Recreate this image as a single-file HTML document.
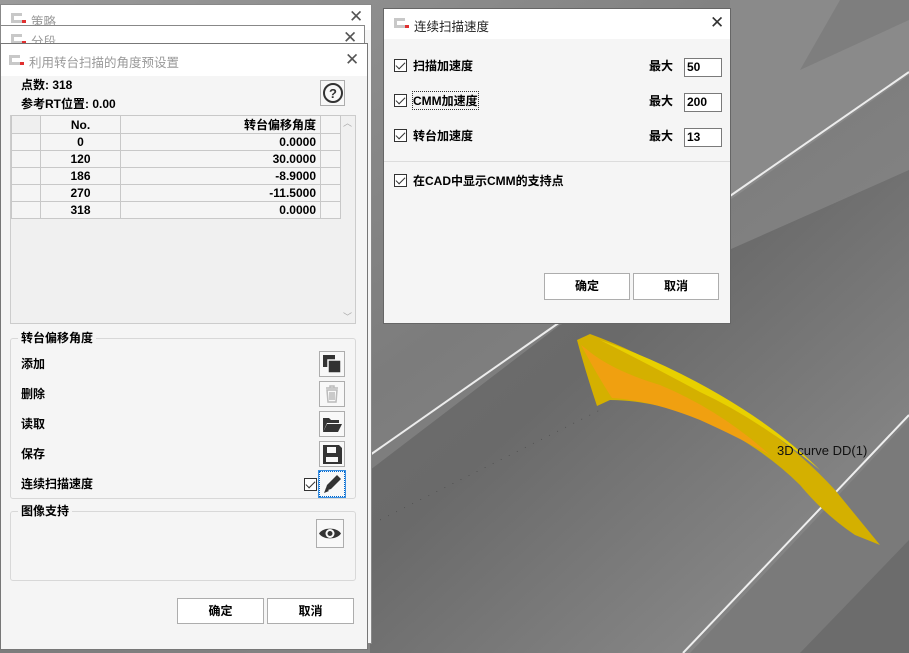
<!DOCTYPE html>
<html><head><meta charset="utf-8"><style>
*{margin:0;padding:0;box-sizing:border-box}
body{width:909px;height:653px;position:relative;overflow:hidden;background:#7a7a7a;font-family:"Liberation Sans","Noto Sans CJK SC",sans-serif;font-size:12px;color:#000}
.a{position:absolute}
.b{font-weight:bold}
.win{position:absolute;background:#f5f5f5;border:1px solid #888}
.tb{position:absolute;left:0;right:0;top:0;background:#fff}
.tt{position:absolute;color:#999;font-size:12.5px}
.x{position:absolute;font-size:17px;color:#555;font-weight:normal}
.logo{position:absolute;width:11px;height:10px;border:3px solid #c8c8c8;border-right:none;}
.logo:after{content:"";position:absolute;left:8px;bottom:-3px;width:4px;height:3px;background:#e03030}
.btn{position:absolute;background:#fff;border:1px solid #adadad;text-align:center;font-weight:bold;line-height:24px}
.ib{position:absolute;width:26px;height:26px;border:1px solid #adadad;background:#f8f8f8}
.cb{position:absolute;width:13px;height:13px;border:1px solid #333;background:#fff}
.cb:after{content:"";position:absolute;left:3px;top:0px;width:4px;height:8px;border:solid #333;border-width:0 1px 1px 0;transform:rotate(45deg)}
.inp{position:absolute;width:38px;height:19px;border:1px solid #7a7a7a;background:#fff;font-weight:bold;padding-left:2px;line-height:17px}
table{border-collapse:collapse}
td{border:1px solid #c8c8c8;height:17px;font-weight:bold;padding:0 4px}
</style></head><body>
<svg class="a" style="left:0;top:0" width="909" height="653">
<defs>
<linearGradient id="g1" x1="0" y1="0" x2="1" y2="1"><stop offset="0" stop-color="#9a9a9a"/><stop offset="0.5" stop-color="#7c7c7c"/><stop offset="1" stop-color="#909090"/></linearGradient>
<linearGradient id="g2" x1="0" y1="0" x2="1" y2="1"><stop offset="0" stop-color="#707070"/><stop offset="0.4" stop-color="#6a6a6a"/><stop offset="1" stop-color="#939393"/></linearGradient>
</defs>
<rect width="909" height="653" fill="url(#g1)"/>
<polygon points="370,470 560,325 909,170 909,420 690,653 370,653" fill="url(#g2)"/>
<polygon points="730,200 909,75 909,0 730,0" fill="#8a8a8a"/>
<polygon points="840,0 909,0 909,20 800,70" fill="#7e7e7e"/>
<polygon points="690,653 909,420 909,653" fill="#7a7a7a"/>
<polygon points="800,653 909,540 909,653" fill="#6c6c6c"/>
<line x1="370" y1="455" x2="560" y2="322" stroke="#ececec" stroke-width="2"/>
<line x1="683" y1="653" x2="909" y2="415" stroke="#eeeeee" stroke-width="2"/>
<line x1="730" y1="196" x2="909" y2="72" stroke="#ececec" stroke-width="2"/>
<line x1="380" y1="520" x2="600" y2="410" stroke="#444" stroke-width="0.6" stroke-dasharray="1 8"/>
<path d="M577,340 L590,334 Q640,352 700,388 Q780,430 835,490 L880,545 L855,535 Q825,515 800,485 Q760,445 700,418 Q650,400 610,400 L597,406 Q585,370 577,340z" fill="#d4b000"/>
<path d="M581,345 Q600,380 612,398 Q650,400 700,420 Q740,438 770,455 Q720,410 660,385 Q610,370 585,348z" fill="#f0a010"/>
<path d="M600,340 Q660,360 720,395 Q780,430 820,470 Q760,420 700,392 Q650,365 600,340z" fill="#e8d000"/>
<text x="777" y="455" font-family="Liberation Sans" font-size="13" fill="#111">3D curve DD(1)</text>
</svg>

<!-- back windows -->
<div class="win" style="left:0;top:4px;width:372px;height:640px;background:#f5f5f5"><div class="tb" style="height:25px"></div><div class="logo" style="left:10px;top:8px"></div><div class="tt" style="left:30px;top:6px">策略</div><div class="x" style="left:348px;top:2px">✕</div></div>
<div class="win" style="left:0;top:25px;width:365px;height:625px"><div class="tb" style="height:25px"></div><div class="logo" style="left:10px;top:8px"></div><div class="tt" style="left:30px;top:5px">分段</div><div class="x" style="left:342px;top:2px">✕</div></div>

<!-- main dialog -->
<div class="win" style="left:0;top:43px;width:368px;height:607px;border-color:#777">
<div class="tb" style="height:32px"></div>
<div class="logo" style="left:8px;top:11px"></div>
<div class="tt" style="left:28px;top:8px">利用转台扫描的角度预设置</div>
<div class="x" style="left:344px;top:6px">✕</div>
</div>
<div class="a b" style="left:21px;top:76px">点数: 318</div>
<div class="a b" style="left:21px;top:95px">参考RT位置: 0.00</div>
<div class="ib" style="left:320px;top:80px;width:25px"><svg width="24" height="24"><circle cx="12" cy="12" r="9" fill="none" stroke="#333" stroke-width="2"/><text x="12" y="17" text-anchor="middle" font-family="Liberation Sans" font-weight="bold" font-size="13" fill="#333">?</text></svg></div>
<div class="a" style="left:10px;top:115px;width:346px;height:209px;border:1px solid #ccc;background:#f0f0f0"></div>
<div class="a" style="left:340px;top:116px;width:15px;height:207px;background:#f0f0f0;color:#aaa;font-size:9px;text-align:center">︿<div style="position:absolute;bottom:0;width:15px">﹀</div></div>
<table class="a" style="left:11px;top:115px;background:#f5f5f5">
<tr><td style="width:29px;background:#efefef"></td><td style="width:80px;text-align:center">No.</td><td style="width:200px;text-align:right">转台偏移角度</td><td style="width:20px"></td></tr>
<tr><td></td><td style="text-align:center">0</td><td style="text-align:right">0.0000</td><td></td></tr>
<tr><td></td><td style="text-align:center">120</td><td style="text-align:right">30.0000</td><td></td></tr>
<tr><td></td><td style="text-align:center">186</td><td style="text-align:right">-8.9000</td><td></td></tr>
<tr><td></td><td style="text-align:center">270</td><td style="text-align:right">-11.5000</td><td></td></tr>
<tr><td></td><td style="text-align:center">318</td><td style="text-align:right">0.0000</td><td></td></tr>
</table>

<div class="a" style="left:10px;top:338px;width:346px;height:161px;border:1px solid #d8d8d8;border-radius:3px"></div>
<div class="a b" style="left:18px;top:329px;background:#f5f5f5;padding:0 3px">转台偏移角度</div>
<div class="a b" style="left:21px;top:355px">添加</div>
<div class="a b" style="left:21px;top:385px">删除</div>
<div class="a b" style="left:21px;top:415px">读取</div>
<div class="a b" style="left:21px;top:445px">保存</div>
<div class="a b" style="left:21px;top:475px">连续扫描速度</div>
<div class="ib" style="left:319px;top:351px"><svg width="24" height="24"><rect x="3" y="3" width="12" height="12" fill="#333"/><rect x="8" y="8" width="13" height="13" fill="#333" stroke="#f8f8f8" stroke-width="1.5"/></svg></div>
<div class="ib" style="left:319px;top:381px"><svg width="24" height="24" fill="none" stroke="#bbb" stroke-width="1.5"><path d="M6 6h12M10 6V4h4v2M7 8l1 12h8l1-12z"/><path d="M10 10v8M12 10v8M14 10v8"/></svg></div>
<div class="ib" style="left:319px;top:411px"><svg width="24" height="24"><path d="M3 6h6l2 2h8v3H7l-4 9z" fill="#333"/><path d="M7 12h15l-4 8H3z" fill="#333"/></svg></div>
<div class="ib" style="left:319px;top:441px"><svg width="24" height="24"><path d="M3 3h16l3 3v16H3z" fill="#333"/><rect x="7" y="5" width="9" height="6" fill="#f8f8f8"/><rect x="6" y="15" width="12" height="5" fill="#f8f8f8"/></svg></div>
<div class="cb" style="left:304px;top:478px"></div>
<div class="ib" style="left:319px;top:471px;border:1px dotted #0066cc;outline:1px solid #3b8fe0"><svg width="24" height="24"><path d="M5 19l2-6L17 3l4 4L11 17z" fill="#333"/><path d="M4 21l2-5 3 3z" fill="#333"/></svg></div>

<div class="a" style="left:10px;top:511px;width:346px;height:70px;border:1px solid #d8d8d8;border-radius:3px"></div>
<div class="a b" style="left:18px;top:502px;background:#f5f5f5;padding:0 3px">图像支持</div>
<div class="ib" style="left:316px;top:519px;width:28px;height:29px"><svg width="26" height="27"><path d="M2 13.5C6 7 20 7 24 13.5C20 20 6 20 2 13.5z" fill="#333"/><circle cx="13" cy="13.5" r="4.5" fill="#f8f8f8"/><circle cx="13" cy="13.5" r="2.5" fill="#333"/></svg></div>

<div class="btn" style="left:177px;top:598px;width:87px;height:26px">确定</div>
<div class="btn" style="left:267px;top:598px;width:87px;height:26px">取消</div>

<!-- right dialog -->
<div class="win" style="left:383px;top:8px;width:348px;height:316px;border-color:#666">
<div class="tb" style="height:30px"></div>
<div class="logo" style="left:10px;top:9px"></div>
<div class="a" style="left:30px;top:7px;color:#222;font-size:12.5px">连续扫描速度</div>
<div class="x" style="left:326px;top:4px;color:#333">✕</div>
<div class="a" style="left:0;right:0;top:152px;height:1px;background:#dcdcdc"></div>
</div>
<div class="cb" style="left:394px;top:59px"></div><div class="a b" style="left:413px;top:57px">扫描加速度</div>
<div class="cb" style="left:394px;top:94px"></div><div class="a b" style="left:413px;top:92px;outline:1px dotted #333">CMM加速度</div>
<div class="cb" style="left:394px;top:129px"></div><div class="a b" style="left:413px;top:127px">转台加速度</div>
<div class="a b" style="left:649px;top:57px">最大</div><div class="inp" style="left:684px;top:58px">50</div>
<div class="a b" style="left:649px;top:92px">最大</div><div class="inp" style="left:684px;top:93px">200</div>
<div class="a b" style="left:649px;top:127px">最大</div><div class="inp" style="left:684px;top:128px">13</div>
<div class="cb" style="left:394px;top:174px"></div><div class="a b" style="left:413px;top:172px">在CAD中显示CMM的支持点</div>
<div class="btn" style="left:544px;top:273px;width:86px;height:27px">确定</div>
<div class="btn" style="left:633px;top:273px;width:86px;height:27px">取消</div>
</body></html>
